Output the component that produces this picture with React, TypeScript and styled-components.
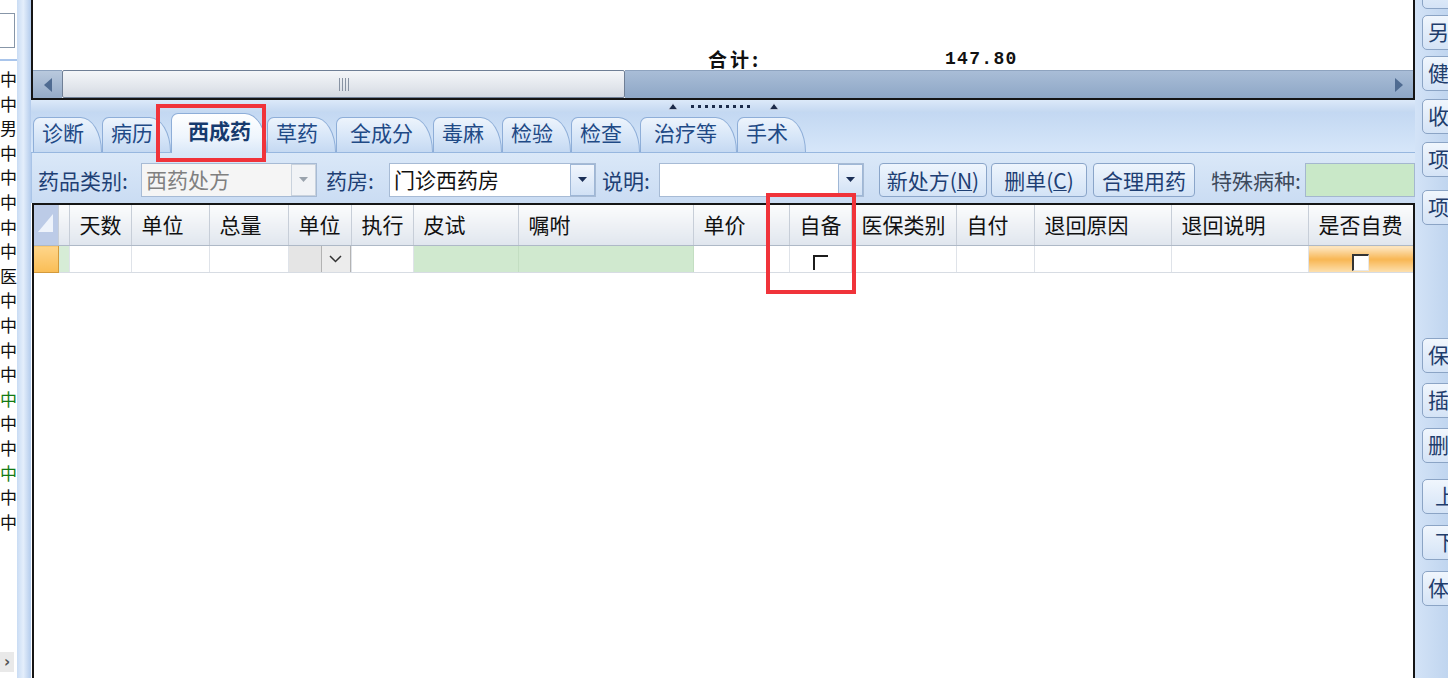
import * as React from "react";
import styled, { createGlobalStyle } from "styled-components";

const CJK = `"Noto Sans CJK SC", "Noto Sans", sans-serif`;

type CellKind = "rowhead" | "mark" | "plain" | "combo" | "green" | "check" | "orange";

type Column = {
  label: string;
  w: number;
  kind: CellKind;
};

const COLUMNS: Column[] = [
  { label: "", w: 24, kind: "rowhead" },
  { label: "", w: 11, kind: "mark" },
  { label: "天数", w: 62, kind: "plain" },
  { label: "单位", w: 78, kind: "plain" },
  { label: "总量", w: 79, kind: "plain" },
  { label: "单位", w: 63, kind: "combo" },
  { label: "执行", w: 62, kind: "plain" },
  { label: "皮试", w: 105, kind: "green" },
  { label: "嘱咐", w: 175, kind: "green" },
  { label: "单价", w: 96, kind: "plain" },
  { label: "自备", w: 62, kind: "check" },
  { label: "医保类别", w: 105, kind: "plain" },
  { label: "自付", w: 78, kind: "plain" },
  { label: "退回原因", w: 137, kind: "plain" },
  { label: "退回说明", w: 137, kind: "plain" },
  { label: "是否自费", w: 105, kind: "orange" },
];

const TABS = ["诊断", "病历", "西成药", "草药", "全成分", "毒麻", "检验", "检查", "治疗等", "手术"];

const LEFT_CHARS: { c: string; green?: boolean }[] = [
  { c: "中" }, { c: "中" }, { c: "男" }, { c: "中" }, { c: "中" }, { c: "中" },
  { c: "中" }, { c: "中" }, { c: "医" }, { c: "中" }, { c: "中" }, { c: "中" },
  { c: "中" }, { c: "中", green: true }, { c: "中" }, { c: "中" },
  { c: "中", green: true }, { c: "中" }, { c: "中" },
];

const SIDE_BUTTONS: { label: string; gap: number; pad?: number }[] = [
  { label: "", gap: -26 },
  { label: "另", gap: 6 },
  { label: "健", gap: 6 },
  { label: "收", gap: 8 },
  { label: "项", gap: 8 },
  { label: "项", gap: 13 },
  { label: "保", gap: 113 },
  { label: "插", gap: 10 },
  { label: "删", gap: 10 },
  { label: "上", gap: 16, pad: 12 },
  { label: "下", gap: 11, pad: 12 },
  { label: "体", gap: 11 },
];

const GlobalStyle = createGlobalStyle`
  html, body {
    margin: 0;
    padding: 0;
    overflow: hidden;
    background: #ffffff;
  }
  body {
    font-family: ${CJK};
  }
`;

const Page = styled.div`
  position: relative;
  width: 1448px;
  height: 678px;
  display: flex;
  overflow: hidden;
  background: #ffffff;
`;

/* ---------- left list ---------- */

const LeftList = styled.div`
  width: 17px;
  flex: none;
  display: flex;
  flex-direction: column;
  overflow: hidden;
  background: #ffffff;
`;

const LeftInput = styled.div`
  width: 15px;
  height: 35px;
  margin-top: 13px;
  box-sizing: border-box;
  border: 1px solid #8796a8;
  border-left: none;
  background: #ffffff;
`;

const LeftRule = styled.div`
  height: 2px;
  margin-top: 11px;
  background: #a9c5eb;
`;

const LeftChars = styled.div`
  padding-top: 6px;
`;

const LeftChar = styled.div<{ $green?: boolean }>`
  height: 24.6px;
  line-height: 24.6px;
  font-size: 17px;
  white-space: nowrap;
  color: ${(p) => (p.$green ? "#127a12" : "#111111")};
`;

const LeftArrow = styled.div`
  margin-top: auto;
  margin-bottom: 6px;
  width: 14px;
  height: 20px;
  display: flex;
  align-items: center;
  justify-content: center;
  background: #e9e9e9;
  color: #555;
  font-family: "DejaVu Sans", sans-serif;
  font-size: 15px;
  font-weight: bold;
`;

const LeftBar = styled.div`
  width: 14px;
  flex: none;
  background: linear-gradient(to right, #c9dcf4, #e4eefb 45%, #b3cbec);
`;

/* ---------- main column ---------- */

const Main = styled.div`
  width: 1384px;
  flex: none;
  display: flex;
  flex-direction: column;
`;

const TopPanel = styled.div`
  height: 100px;
  flex: none;
  box-sizing: border-box;
  border-left: 2px solid #151515;
  border-right: 2px solid #151515;
  border-bottom: 2px solid #151515;
  background: #ffffff;
  display: flex;
  flex-direction: column;
`;

const Totals = styled.div`
  flex: 1;
  display: flex;
  align-items: flex-end;
  padding-left: 675px;
  padding-bottom: 0;
`;

const TotalLabel = styled.span`
  width: 237px;
  font-family: ${CJK};
  font-weight: bold;
  font-size: 19px;
  letter-spacing: 3px;
  line-height: 22px;
  color: #111;
`;

const TotalValue = styled.span`
  font-family: "Liberation Mono", "DejaVu Sans Mono", monospace;
  font-weight: bold;
  font-size: 18px;
  letter-spacing: 1.3px;
  line-height: 22px;
  color: #111;
`;

const HScroll = styled.div`
  height: 28px;
  flex: none;
  display: flex;
`;

const ScrollButton = styled.div`
  width: 29px;
  flex: none;
  display: flex;
  align-items: center;
  justify-content: center;
  background: linear-gradient(to bottom, #b9c9dd, #95abc8);
  border-top: 1px solid #8ea3bf;
`;

const ScrollThumb = styled.div`
  width: 563px;
  flex: none;
  box-sizing: border-box;
  border: 1px solid #6f7f96;
  border-radius: 2px;
  background: linear-gradient(to bottom, #f4f6f9, #e2e6ec 60%, #d3d9e2);
  display: flex;
  align-items: center;
  justify-content: center;
`;

const Grip = styled.div`
  display: flex;
  gap: 2px;
  span {
    width: 1px;
    height: 13px;
    background: #8893a3;
  }
`;

const ScrollTrack = styled.div`
  flex: 1;
  display: flex;
  align-items: center;
  justify-content: flex-end;
  padding-right: 10px;
  background: linear-gradient(to bottom, #a9bdd7, #8ea7c6);
  border-top: 1px solid #8ea3bf;
`;

const Splitter = styled.div`
  height: 12px;
  flex: none;
  display: flex;
  align-items: center;
  justify-content: center;
  background: linear-gradient(to bottom, #dce9f9, #c4d8f1);
`;

const Dots = styled.div`
  display: flex;
  gap: 4px;
  margin: 0 19px 0 13px;
  span {
    width: 3px;
    height: 3px;
    background: #1c2b4a;
  }
`;

const TabStrip = styled.div`
  height: 41px;
  flex: none;
  box-sizing: border-box;
  display: flex;
  align-items: flex-end;
  padding-left: 2px;
  background: linear-gradient(to bottom, #c3d8f2, #d6e6f9);
  border-bottom: 1px solid #97b7df;
`;

const Tab = styled.div<{ $active?: boolean; $long?: boolean }>`
  height: ${(p) => (p.$active ? "40px" : "35px")};
  margin-bottom: ${(p) => (p.$active ? "-1px" : "0")};
  box-sizing: border-box;
  display: flex;
  align-items: center;
  padding-top: 0;
  padding-bottom: ${(p) => (p.$active ? "7px" : "6px")};
  padding-left: ${(p) => (p.$active ? 16 : p.$long ? 13 : 8)}px;
  padding-right: ${(p) => (p.$active ? 15 : p.$long ? 19 : 17)}px;
  border: 1px solid #8eaed8;
  border-bottom: none;
  border-radius: 7px 22px 0 0 / 7px 36px 0 0;
  background: ${(p) =>
    p.$active
      ? "linear-gradient(to bottom, #ffffff, #eef5fd 60%, #dae8f8)"
      : "linear-gradient(to bottom, #edf4fc, #d7e6f8 55%, #c5d9f2)"};
  font-family: ${CJK};
  font-size: 21px;
  font-weight: ${(p) => (p.$active ? "bold" : "normal")};
  color: ${(p) => (p.$active ? "#163a6e" : "#1f4a86")};
  white-space: nowrap;
  z-index: ${(p) => (p.$active ? 2 : 1)};
`;

const Toolbar = styled.div`
  height: 50px;
  flex: none;
  box-sizing: border-box;
  display: flex;
  align-items: center;
  padding: 3px 0 0 6px;
  background: linear-gradient(to bottom, #dae8f8, #cadcf3);
  border-left: 1px solid #a9c4e7;
  overflow: hidden;
`;

const Label = styled.span<{ $w: number; $ml?: number; $muted?: boolean }>`
  width: ${(p) => p.$w}px;
  margin-left: ${(p) => p.$ml ?? 0}px;
  flex: none;
  font-family: ${CJK};
  font-size: 21px;
  color: ${(p) => (p.$muted ? "#3d4a5c" : "#1e3f74")};
  white-space: nowrap;
  overflow: hidden;
`;

const Combo = styled.div<{ $w: number; $ml?: number; $disabled?: boolean }>`
  width: ${(p) => p.$w}px;
  margin-left: ${(p) => p.$ml ?? 0}px;
  height: 34px;
  flex: none;
  box-sizing: border-box;
  display: flex;
  border: 1px solid #a7bbd5;
  background: ${(p) => (p.$disabled ? "#f5f5f5" : "#ffffff")};
`;

const ComboText = styled.span<{ $disabled?: boolean }>`
  flex: 1;
  padding-left: 4px;
  font-size: 21px;
  line-height: 31px;
  color: ${(p) => (p.$disabled ? "#808080" : "#111")};
  white-space: nowrap;
  overflow: hidden;
`;

const ComboButton = styled.span<{ $disabled?: boolean }>`
  width: 23px;
  flex: none;
  display: flex;
  align-items: center;
  justify-content: center;
  border: 1px solid ${(p) => (p.$disabled ? "#c9d2dd" : "#9fb7d6")};
  background: ${(p) =>
    p.$disabled ? "#f1f3f6" : "linear-gradient(to bottom, #f1f6fd, #d1e1f5)"};
`;

const ToolButton = styled.button<{ $w: number; $ml: number }>`
  width: ${(p) => p.$w}px;
  margin-left: ${(p) => p.$ml}px;
  height: 34px;
  flex: none;
  padding: 0;
  border: 1px solid #8aa5c9;
  border-radius: 4px;
  background: linear-gradient(to bottom, #eef5fd, #d3e3f6);
  font-family: ${CJK};
  font-size: 21px;
  color: #1e3f74;
  white-space: nowrap;
  u {
    text-decoration-thickness: 1px;
  }
`;

const GreenInput = styled.div`
  flex: 1;
  margin-left: 2px;
  height: 34px;
  box-sizing: border-box;
  border: 1px solid #a4b7cf;
  background: #c9e8c8;
`;

/* ---------- grid ---------- */

const Grid = styled.div`
  flex: 1;
  margin-left: 1px;
  box-sizing: border-box;
  border-top: 2px solid #151515;
  border-left: 2px solid #151515;
  border-right: 2px solid #151515;
  background: #ffffff;
  overflow: hidden;
`;

const Table = styled.table`
  table-layout: fixed;
  border-collapse: collapse;
  width: 1379px;
`;

const HeadCell = styled.th<{ $kind: CellKind }>`
  height: 34px;
  padding: 0 0 2px 10px;
  box-sizing: border-box;
  text-align: left;
  font-family: ${CJK};
  font-size: 21px;
  font-weight: normal;
  color: #111;
  white-space: nowrap;
  overflow: hidden;
  border-right: 1px solid #c7ced8;
  border-bottom: 1px solid #aeb9c7;
  background: ${(p) =>
    p.$kind === "rowhead"
      ? "#bccbe7"
      : "linear-gradient(to bottom, #fbfcfd, #eef1f5 50%, #e0e6ee)"};
  ${(p) => (p.$kind === "rowhead" || p.$kind === "mark" ? "padding: 0;" : "")}
`;

const cellBackground = (kind: CellKind) => {
  switch (kind) {
    case "rowhead":
      return "linear-gradient(to bottom, #fed58a, #f9bd55)";
    case "mark":
      return "#d6ecd6";
    case "combo":
      return "#e5e5e5";
    case "green":
      return "#d0e9cf";
    case "orange":
      return "linear-gradient(to bottom, #fde8c6, #f8b653 50%, #fde1b1)";
    default:
      return "#ffffff";
  }
};

const DataCell = styled.td<{ $kind: CellKind }>`
  height: 27px;
  padding: 0;
  box-sizing: border-box;
  text-align: center;
  vertical-align: middle;
  border-right: 1px solid
    ${(p) => (p.$kind === "rowhead" ? "#d39a3c" : p.$kind === "green" ? "#c3dec2" : "#dfe3e9")};
  border-bottom: 1px solid ${(p) => (p.$kind === "rowhead" ? "#d39a3c" : "#d7dce3")};
  background: ${(p) => cellBackground(p.$kind)};
`;

const ComboCell = styled.div`
  display: flex;
  height: 26px;
`;

const ComboCellButton = styled.span`
  width: 30px;
  margin-left: auto;
  display: flex;
  align-items: center;
  justify-content: center;
  box-sizing: border-box;
  border-left: 1px solid #b3b3b3;
  border-right: 1px solid #b3b3b3;
  background: #ececec;
`;

const OpenCheck = styled.span`
  display: inline-block;
  width: 15px;
  height: 15px;
  margin-top: 2px;
  box-sizing: border-box;
  border-top: 2px solid #1c1c1c;
  border-left: 2px solid #1c1c1c;
  vertical-align: middle;
`;

const WhiteCheck = styled.span`
  display: inline-block;
  width: 17px;
  height: 17px;
  margin-top: 2px;
  box-sizing: border-box;
  border-top: 2px solid #333;
  border-left: 2px solid #333;
  border-right: 1px solid #e8e8e8;
  border-bottom: 1px solid #e8e8e8;
  background: #ffffff;
  vertical-align: middle;
`;

/* ---------- right bar ---------- */

const RightBar = styled.div`
  flex: 1;
  display: flex;
  flex-direction: column;
  padding-left: 7px;
  background: linear-gradient(to right, #d3e3f7, #c0d5ef);
  overflow: hidden;
`;

const SideButton = styled.div<{ $gap: number; $pad: number }>`
  width: 44px;
  height: 35px;
  flex: none;
  margin-top: ${(p) => p.$gap}px;
  box-sizing: border-box;
  padding-left: ${(p) => p.$pad}px;
  border: 1px solid #8ba4c5;
  border-radius: 5px;
  background: linear-gradient(to bottom, #f0f6fd, #d4e3f6);
  font-family: ${CJK};
  font-size: 21px;
  line-height: 30px;
  color: #1f3d6c;
  white-space: nowrap;
`;

/* ---------- annotation overlays ---------- */

const Callout = styled.div<{ $x: number; $y: number; $w: number; $h: number }>`
  position: absolute;
  left: ${(p) => p.$x}px;
  top: ${(p) => p.$y}px;
  width: ${(p) => p.$w}px;
  height: ${(p) => p.$h}px;
  box-sizing: border-box;
  border: 4px solid #f0333a;
  pointer-events: none;
  z-index: 10;
`;

/* ---------- small drawings ---------- */

const ArrowGlyph = ({ dir }: { dir: "left" | "right" }) => (
  <svg width="8" height="14" viewBox="0 0 8 14">
    <path d={dir === "left" ? "M8 0 L0 7 L8 14 Z" : "M0 0 L8 7 L0 14 Z"} fill="#4f6b91" />
  </svg>
);

const UpGlyph = () => (
  <svg width="10" height="7" viewBox="0 0 10 7">
    <path d="M5 0.5 L9.5 6.5 H0.5 Z" fill="#1c2b4a" stroke="#e8f0fb" strokeWidth="0.6" />
  </svg>
);

const DropGlyph = ({ color }: { color: string }) => (
  <svg width="9" height="5" viewBox="0 0 9 5">
    <path d="M0 0 H9 L4.5 5 Z" fill={color} />
  </svg>
);

const ChevronGlyph = () => (
  <svg width="13" height="8" viewBox="0 0 13 8">
    <polyline points="1,1 6.5,6.5 12,1" fill="none" stroke="#333" strokeWidth="1.5" />
  </svg>
);

const SelectAllGlyph = () => (
  <svg width="24" height="34" viewBox="0 0 24 34">
    <path d="M19 9 L19 27 L4 27 Z" fill="#eef3fb" />
  </svg>
);

const renderDataCell = (kind: CellKind) => {
  if (kind === "combo") {
    return (
      <ComboCell>
        <ComboCellButton>
          <ChevronGlyph />
        </ComboCellButton>
      </ComboCell>
    );
  }
  if (kind === "check") return <OpenCheck />;
  if (kind === "orange") return <WhiteCheck />;
  return null;
};

const App = () => {
  return (
    <React.Fragment>
      <GlobalStyle />
      <Page>
        <LeftList>
          <LeftInput />
          <LeftRule />
          <LeftChars>
            {LEFT_CHARS.map((item, index) => (
              <LeftChar key={index} $green={item.green}>
                {item.c}
              </LeftChar>
            ))}
          </LeftChars>
          <LeftArrow>›</LeftArrow>
        </LeftList>
        <LeftBar />

        <Main>
          <TopPanel>
            <Totals>
              <TotalLabel>合计:</TotalLabel>
              <TotalValue>147.80</TotalValue>
            </Totals>
            <HScroll>
              <ScrollButton>
                <ArrowGlyph dir="left" />
              </ScrollButton>
              <ScrollThumb>
                <Grip>
                  <span />
                  <span />
                  <span />
                  <span />
                </Grip>
              </ScrollThumb>
              <ScrollTrack>
                <ArrowGlyph dir="right" />
              </ScrollTrack>
            </HScroll>
          </TopPanel>

          <Splitter>
            <UpGlyph />
            <Dots>
              {Array.from({ length: 9 }).map((_, i) => (
                <span key={i} />
              ))}
            </Dots>
            <UpGlyph />
          </Splitter>

          <TabStrip>
            {TABS.map((tab) => (
              <Tab key={tab} $active={tab === "西成药"} $long={tab.length > 2}>
                {tab}
              </Tab>
            ))}
          </TabStrip>

          <Toolbar>
            <Label $w={103}>药品类别:</Label>
            <Combo $w={176} $disabled>
              <ComboText $disabled>西药处方</ComboText>
              <ComboButton $disabled>
                <DropGlyph color="#9aa3ad" />
              </ComboButton>
            </Combo>
            <Label $w={63} $ml={9}>
              药房:
            </Label>
            <Combo $w={207}>
              <ComboText>门诊西药房</ComboText>
              <ComboButton>
                <DropGlyph color="#1b2f57" />
              </ComboButton>
            </Combo>
            <Label $w={57} $ml={6}>
              说明:
            </Label>
            <Combo $w={205}>
              <ComboText />
              <ComboButton>
                <DropGlyph color="#1b2f57" />
              </ComboButton>
            </Combo>
            <ToolButton $w={108} $ml={15}>
              新处方(<u>N</u>)
            </ToolButton>
            <ToolButton $w={96} $ml={4}>
              删单(<u>C</u>)
            </ToolButton>
            <ToolButton $w={102} $ml={6}>
              合理用药
            </ToolButton>
            <Label $w={92} $ml={16} $muted>
              特殊病种:
            </Label>
            <GreenInput />
          </Toolbar>

          <Grid>
            <Table>
              <colgroup>
                {COLUMNS.map((col, i) => (
                  <col key={i} width={col.w} />
                ))}
              </colgroup>
              <thead>
                <tr>
                  {COLUMNS.map((col, i) => (
                    <HeadCell key={i} $kind={col.kind}>
                      {col.kind === "rowhead" ? <SelectAllGlyph /> : col.label}
                    </HeadCell>
                  ))}
                </tr>
              </thead>
              <tbody>
                <tr>
                  {COLUMNS.map((col, i) => (
                    <DataCell key={i} $kind={col.kind}>
                      {renderDataCell(col.kind)}
                    </DataCell>
                  ))}
                </tr>
              </tbody>
            </Table>
          </Grid>
        </Main>

        <RightBar>
          {SIDE_BUTTONS.map((b, i) => (
            <SideButton key={i} $gap={b.gap} $pad={b.pad ?? 5}>
              {b.label}
            </SideButton>
          ))}
        </RightBar>

        <Callout $x={156} $y={104} $w={110} $h={58} />
        <Callout $x={766} $y={193} $w={90} $h={101} />
      </Page>
    </React.Fragment>
  );
};

export default App;
